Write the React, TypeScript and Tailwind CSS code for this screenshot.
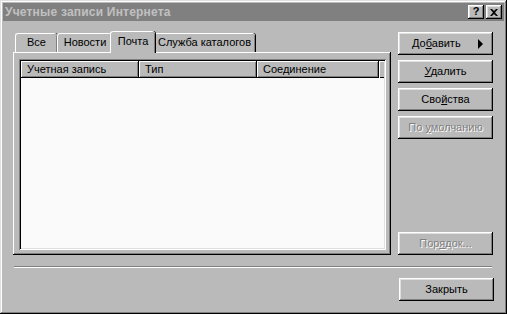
import React from "react";

const raised =
  "shadow-[inset_-1px_-1px_0_#000,inset_1px_1px_0_#fff,inset_-2px_-2px_0_#808080,inset_2px_2px_0_#dfdfdf]";

const Btn = ({
  children,
  disabled,
  spread,
  className = "",
}: {
  children: React.ReactNode;
  disabled?: boolean;
  spread?: boolean;
  className?: string;
}) => (
  <div
    className={`h-[23px] w-[95px] shrink-0 bg-[#bababa] flex items-center ${
      spread ? "justify-between pl-[14px] pr-[10px]" : "justify-center"
    } ${raised} ${
      disabled ? "text-[#808080] [text-shadow:1px_1px_0_#fff]" : "text-black"
    } ${className}`}>
    {children}
  </div>
);

const Tab = ({
  label,
  width,
  active,
}: {
  label: string;
  width: number;
  active?: boolean;
}) => (
  <div
    style={{ width }}
    className={`relative bg-[#bababa] rounded-t-[3px] flex items-center justify-center border-t border-l border-t-white border-l-white shadow-[inset_-1px_0_0_#808080,1px_0_0_#000] ${
      active ? "h-[22px] z-10 -mb-[1px] pb-[3px]" : "h-[19px] pb-[1px]"
    }`}>
    {label}
  </div>
);

const HeaderCell = ({ label, width }: { label: string; width: number }) => (
  <div
    style={{ width }}
    className="h-[17px] shrink-0 bg-[#bababa] flex items-center pl-[6px] shadow-[inset_-1px_-1px_0_#000,inset_1px_1px_0_#fff,inset_-2px_-2px_0_#808080]">
    {label}
  </div>
);

export default function App() {
  return (
    <div className="w-[507px] h-[314px] bg-[#bababa] p-[3px] font-['Liberation_Sans',sans-serif] text-[11px] leading-none text-black shadow-[inset_-1px_-1px_0_#000,inset_1px_1px_0_#dfdfdf,inset_-2px_-2px_0_#808080,inset_2px_2px_0_#fff] flex flex-col">
      {/* title bar */}
      <div className="h-[18px] bg-[#808080] flex items-center justify-between pl-[2px] pr-[2px]">
        <span className="font-bold text-[12px] text-[#c0c0c0] tracking-[0.2px]">
          Учетные записи Интернета
        </span>
        <div className="flex gap-[2px]">
          <div
            className={`w-[16px] h-[14px] bg-[#bababa] ${raised} flex items-center justify-center font-bold text-[11px] pb-[1px]`}>
            ?
          </div>
          <div
            className={`w-[16px] h-[14px] bg-[#bababa] ${raised} flex items-center justify-center`}>
            <svg width="8" height="7" viewBox="0 0 8 7">
              <path d="M0 0h2l2 2 2-2h2L5 3.5 8 7H6L4 5 2 7H0l3-3.5z" fill="#000" />
            </svg>
          </div>
        </div>
      </div>

      {/* body */}
      <div className="flex pl-[10px] pt-[10px]">
        <div className="w-[378px] flex flex-col">
          <div className="h-[21px] flex items-end pl-[2px]">
            <Tab label="Все" width={42} />
            <Tab label="Новости" width={55} />
            <div className="-mx-[2px] flex items-end z-10">
              <Tab label="Почта" width={45} active />
            </div>
            <Tab label="Служба каталогов" width={102} />
          </div>
          <div className="h-[203px] bg-[#bababa] pt-[7px] pl-[6px] pr-[5px] pb-[5px] shadow-[inset_-1px_-1px_0_#000,inset_1px_1px_0_#fff,inset_-2px_-2px_0_#808080]">
            <div className="h-full bg-[#fafafa] p-[2px] shadow-[inset_1px_1px_0_#808080,inset_-1px_-1px_0_#fff,inset_2px_2px_0_#000,inset_-2px_-2px_0_#dfdfdf]">
              <div className="flex">
                <HeaderCell label="Учетная запись" width={118} />
                <HeaderCell label="Тип" width={118} />
                <HeaderCell label="Соединение" width={122} />
                <div className="h-[17px] flex-1 bg-[#bababa] shadow-[inset_1px_1px_0_#fff,inset_0_-1px_0_#000]" />
              </div>
            </div>
          </div>
        </div>

        <div className="ml-[7px] pt-[1px] flex flex-col gap-[5px]">
          <Btn spread>
            <span>
              До<span className="underline">б</span>авить
            </span>
            <span className="w-0 h-0 border-y-[5px] border-y-transparent border-l-[5px] border-l-black" />
          </Btn>
          <Btn>
            <span>
              <span className="underline">У</span>далить
            </span>
          </Btn>
          <Btn>
            <span>
              Сво<span className="underline">й</span>ства
            </span>
          </Btn>
          <Btn disabled>
            <span>
              По <span className="underline">у</span>молчанию
            </span>
          </Btn>
          <Btn disabled className="mt-auto">
            <span>
              Пор<span className="underline">я</span>док...
            </span>
          </Btn>
        </div>
      </div>

      {/* separator */}
      <div className="ml-[11px] mt-[11px] w-[478px] h-[2px] border-t border-t-[#808080] border-b border-b-white" />

      <div className="flex justify-end pr-[10px] mt-[10px]">
        <Btn>Закрыть</Btn>
      </div>
    </div>
  );
}
